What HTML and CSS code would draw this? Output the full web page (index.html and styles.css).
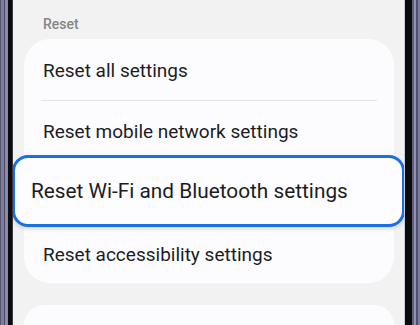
FILE: index.html
```html
<!DOCTYPE html>
<html lang="en">

<head>
  <meta charset="UTF-8">
  <meta name="viewport" content="width=device-width, initial-scale=1.0">
  <title>Reset</title>
  <link rel="stylesheet" href="styles.css">
</head>

<body>
  <div class="phone">
    <div class="bezel bezel-left"></div>

    <div class="screen">
      <div class="section-title">Reset</div>

      <div class="card">
        <div class="row row-first">Reset all settings</div>
        <div class="divider"></div>
        <div class="row row-second">Reset mobile network settings</div>
        <div class="row row-focus">Reset Wi-Fi and Bluetooth settings</div>
        <div class="row row-last">Reset accessibility settings</div>
      </div>

      <div class="card card-next"></div>
    </div>

    <div class="bezel bezel-right"></div>
  </div>
</body>

</html>
```

FILE: styles.css
```css
body {
  margin: 0;
  font-family: Roboto, 'Noto Sans', sans-serif;
  color: #1c1c1e;
  overflow: hidden;
}

.phone {
  display: flex;
  width: 420px;
  height: 325px;
  overflow: hidden;
}

.bezel {
  height: 100%;
}

.bezel-left {
  width: 13px;
  background: linear-gradient(90deg,
      #55556f 0, #55556f 1px,
      #7d7d9d 1px, #7d7d9d 4px,
      #4b4b62 4px, #4b4b62 5px,
      #8a8aab 5px, #8a8aab 8px,
      #0c0c10 8px, #0c0c10 12px,
      #3a3a3e 12px);
}

.bezel-right {
  width: 16px;
  background: linear-gradient(90deg,
      #cfcfd2 0, #cfcfd2 1px,
      #0b0b0f 1px, #0b0b0f 8px,
      #5e5e7a 8px, #5e5e7a 10px,
      #9090b0 10px, #9090b0 12px,
      #50506a 12px, #50506a 14px,
      #7e7e9e 14px);
}

.screen {
  flex: 1;
  height: 325px;
  overflow: hidden;
  background: #f2f2f2;
  padding: 0 10px 0 11px;
}

.section-title {
  height: 39px;
  box-sizing: border-box;
  padding: 16px 0 0 19px;
  font-size: 14px;
  font-weight: 500;
  color: #858585;
}

.card {
  background: #fcfcfe;
  border-radius: 26px;
  height: 244px;
}

.card-next {
  margin-top: 22px;
  height: 40px;
}

.row {
  display: flex;
  align-items: center;
  box-sizing: border-box;
  padding-left: 19px;
  font-size: 19px;
}

.row-first {
  height: 61px;
  padding-top: 1px;
}

.divider {
  height: 1px;
  background: #e4e4e6;
  margin: 0 17px 0 17px;
}

.row-second {
  height: 54px;
  padding-top: 6px;
}

.row-focus {
  height: 72px;
  margin: 0 -11px 0 -12px;
  padding-left: 16px;
  font-size: 20.8px;
  background: #fdfdff;
  border: 3px solid #1a6fe3;
  border-radius: 16px;
  box-shadow: 0 2px 4px rgba(0, 0, 0, 0.15);
  position: relative;
}

.row-last {
  height: 56px;
  padding-bottom: 2px;
}
```
